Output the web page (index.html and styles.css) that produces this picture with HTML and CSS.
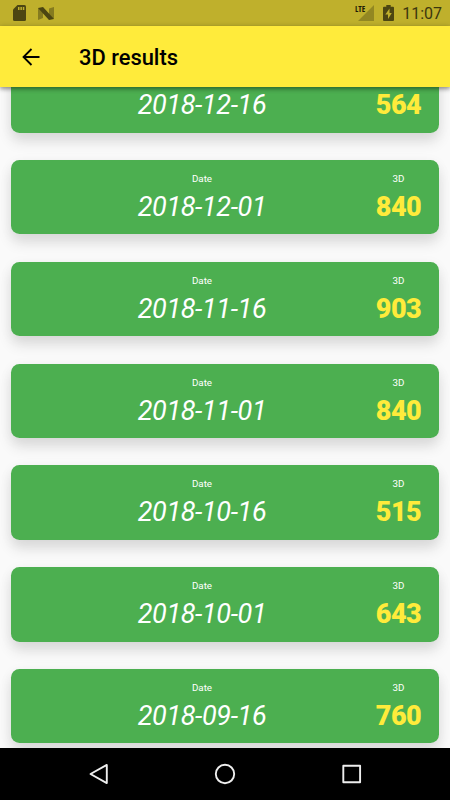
FILE: index.html
```html
<!DOCTYPE html>
<html lang="en">
<head>
    <meta charset="UTF-8">
    <meta name="viewport" content="width=device-width, initial-scale=1.0">
    <title>3D results</title>
    <link rel="stylesheet" href="styles.css">
</head>
<body>
    <div class="status-bar">
        <svg class="sd-icon" width="13" height="16" viewBox="0 0 13 16">
            <path d="M4.5 0H11.5Q13 0 13 1.5V14.5Q13 16 11.5 16H1.5Q0 16 0 14.5V4.5Z" fill="#4c4612"/>
            <path d="M5 2h1.5v3H5zM7.4 2h1.5v3H7.4zM9.8 2h1.5v3H9.8z" fill="#bfb02c"/>
        </svg>
        <svg class="n-icon" width="16" height="13" viewBox="0 0 16 13">
            <path d="M0 1L5 3.5V11L0 13ZM11 1.5L16 0V12L11 9.5Z" fill="#857b1f"/>
            <path d="M0 1L5 0L16 12L11 13Z" fill="#4c4612"/>
        </svg>
        <div class="status-right">
            <span class="lte">LTE</span>
            <svg class="signal-icon" width="16" height="16" viewBox="0 0 16 16">
                <path d="M0 16L16 0V16Z" fill="#928722"/>
            </svg>
            <svg class="battery-icon" width="11" height="16" viewBox="0 0 11 16">
                <path d="M3.3 0h4.4v1.7H10q1 0 1 1V15q0 1-1 1H1q-1 0-1-1V2.7q0-1 1-1h2.3z" fill="#4c4612"/>
                <path d="M6.5 3.5L2.3 9.5H5V14L8.8 8H6.5Z" fill="#bfb02c"/>
            </svg>
            <span class="clock">11:07</span>
        </div>
    </div>

    <header class="app-bar">
        <svg class="back-icon" width="18" height="18" viewBox="0 0 18 18">
            <path d="M17.5 9H1.5M9.5 1L1.5 9L9.5 17" fill="none" stroke="#000" stroke-width="1.8"/>
        </svg>
        <h1>3D results</h1>
    </header>

    <main class="results">
        <div class="card">
            <div class="date-col"><span class="date">2018-12-16</span></div>
            <div class="number-col"><span class="number">564</span></div>
        </div>
        <div class="card">
            <div class="date-col"><span class="label">Date</span><span class="date">2018-12-01</span></div>
            <div class="number-col"><span class="label">3D</span><span class="number">840</span></div>
        </div>
        <div class="card">
            <div class="date-col"><span class="label">Date</span><span class="date">2018-11-16</span></div>
            <div class="number-col"><span class="label">3D</span><span class="number">903</span></div>
        </div>
        <div class="card">
            <div class="date-col"><span class="label">Date</span><span class="date">2018-11-01</span></div>
            <div class="number-col"><span class="label">3D</span><span class="number">840</span></div>
        </div>
        <div class="card">
            <div class="date-col"><span class="label">Date</span><span class="date">2018-10-16</span></div>
            <div class="number-col"><span class="label">3D</span><span class="number">515</span></div>
        </div>
        <div class="card">
            <div class="date-col"><span class="label">Date</span><span class="date">2018-10-01</span></div>
            <div class="number-col"><span class="label">3D</span><span class="number">643</span></div>
        </div>
        <div class="card">
            <div class="date-col"><span class="label">Date</span><span class="date">2018-09-16</span></div>
            <div class="number-col"><span class="label">3D</span><span class="number">760</span></div>
        </div>
    </main>

    <nav class="nav-bar">
        <svg width="22" height="22" viewBox="0 0 22 22">
            <path d="M18.8 1.9V20.1L2.5 11Z" fill="none" stroke="#eee" stroke-width="1.9" stroke-linejoin="round"/>
        </svg>
        <svg width="22" height="22" viewBox="0 0 22 22">
            <circle cx="11" cy="11" r="9.2" fill="none" stroke="#eee" stroke-width="1.9"/>
        </svg>
        <svg width="22" height="22" viewBox="0 0 22 22">
            <rect x="3.3" y="2.8" width="16.8" height="16.4" fill="none" stroke="#eee" stroke-width="1.9" stroke-linejoin="round"/>
        </svg>
    </nav>
</body>
</html>
```

FILE: styles.css
```css
* {
    box-sizing: border-box;
}

body {
    margin: 0;
    height: 800px;
    display: flex;
    flex-direction: column;
    overflow: hidden;
    background: #fafafa;
    font-family: Roboto, sans-serif;
}

.status-bar {
    flex: none;
    height: 26px;
    padding: 0 9px 0 13px;
    display: flex;
    align-items: center;
    background: #bfb02c;
    color: #3c370e;
}

.n-icon {
    margin-left: 12px;
}

.status-right {
    margin-left: auto;
    display: flex;
    align-items: center;
}

.lte {
    align-self: flex-start;
    margin-right: -8px;
    font-family: "Open Sans", sans-serif;
    font-stretch: condensed;
    font-size: 8px;
    font-weight: 700;
    line-height: 12px;
    color: #1c1a06;
}

.signal-icon {
    margin-left: 1px;
}

.battery-icon {
    margin-left: 9px;
}

.clock {
    margin: 2px -1px 0 8px;
    font-size: 16px;
    line-height: 18px;
}

.app-bar {
    position: relative;
    z-index: 1;
    flex: none;
    height: 61px;
    padding-left: 22px;
    display: flex;
    align-items: center;
    background: #ffeb3b;
    box-shadow: 0 2px 4px rgba(0, 0, 0, 0.3), 0 1px 6px rgba(0, 0, 0, 0.2);
}

.app-bar h1 {
    margin: 2px 0 0 39px;
    font-size: 21.9px;
    font-weight: 500;
    line-height: 26px;
}

/* list is scrolled, so the first card sits partly under the app bar */
.results {
    flex: 1;
    min-height: 0;
    padding: 0 11px 4.2px;
    display: flex;
    flex-direction: column;
    justify-content: flex-end;
    gap: 27.4px;
}

.card {
    flex: none;
    height: 74.4px;
    padding: 12px 17.5px 11.4px;
    display: flex;
    border-radius: 8.5px;
    background: #4caf50;
    box-shadow: 0 9px 14px rgba(0, 0, 0, 0.11), 0 3px 14px rgba(0, 0, 0, 0.05);
}

.date-col,
.number-col {
    display: flex;
    flex-direction: column;
    justify-content: flex-end;
    align-items: center;
}

.date-col {
    flex: 1;
}

.number-col {
    width: 46px;
}

.label {
    margin-bottom: 7px;
    font-size: 9.8px;
    line-height: 13px;
    color: #fff;
}

.date,
.number {
    font-size: 27px;
    line-height: 31px;
    letter-spacing: -0.35px;
}

.date {
    font-style: italic;
    color: #fff;
}

.number {
    font-weight: 900;
    letter-spacing: -0.5px;
    color: #ffeb3b;
}

.nav-bar {
    position: relative;
    flex: none;
    height: 52.5px;
    padding: 0 88px;
    display: flex;
    align-items: center;
    justify-content: space-between;
    background: #000;
}
```
